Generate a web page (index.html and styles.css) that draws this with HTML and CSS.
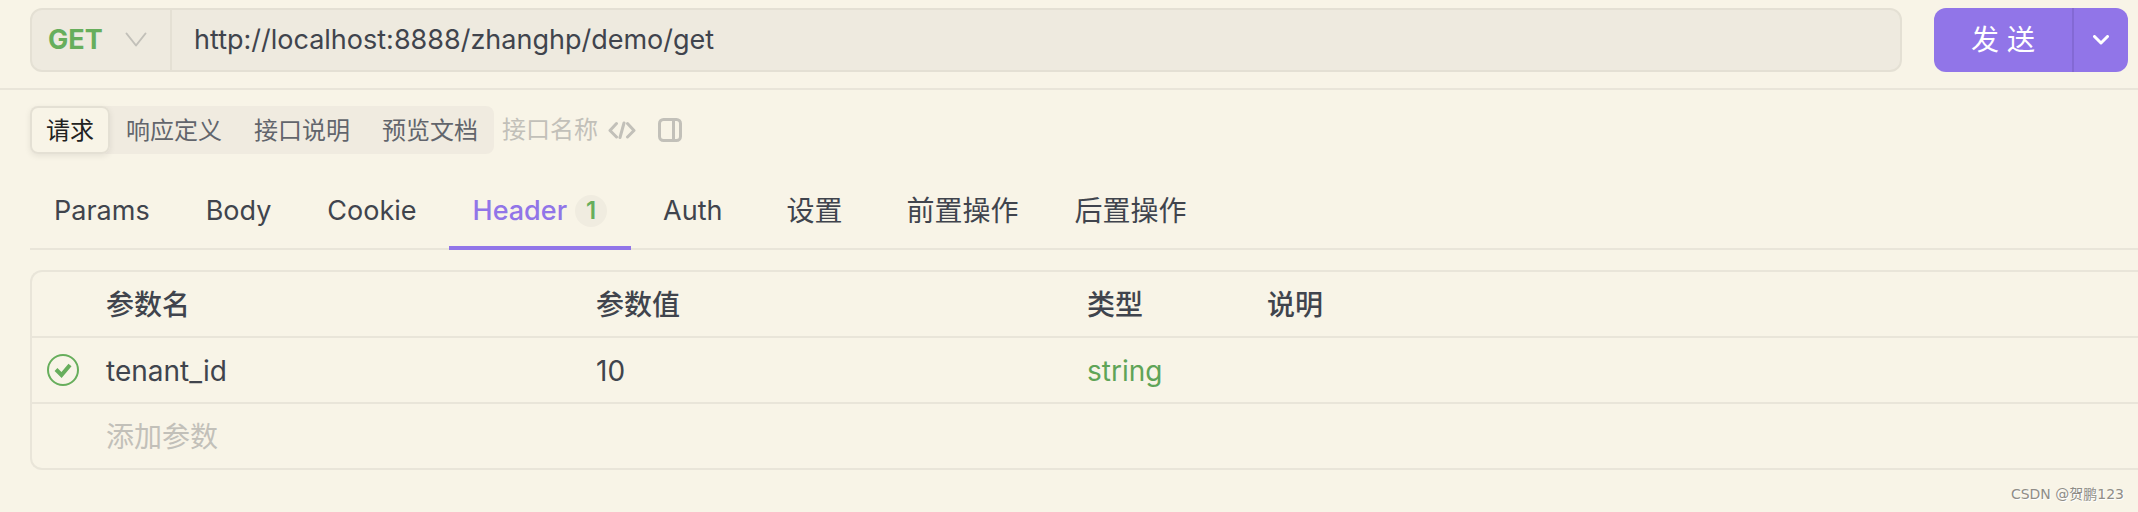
FILE: index.html
```
<!DOCTYPE html>
<html lang="zh-CN">
<head>
    <meta charset="UTF-8">
    <meta name="viewport" content="width=device-width, initial-scale=1.0">
    <title>接口调试</title>
    <link rel="stylesheet" href="styles.css">
</head>
<body>
    <form class="request-bar">
        <div class="url-box">
            <div class="method">
                <select class="method-select" aria-label="请求方法">
                    <option>GET</option>
                    <option>POST</option>
                </select>
                <svg class="method-arrow" viewBox="0 0 22 16" width="22" height="16"><path d="M1.5 1.5 L11 13.5 L20.5 1.5"/></svg>
            </div>
            <input class="url-input" type="text" aria-label="请求地址" value="http://localhost:8888/zhanghp/demo/get">
        </div>
        <div class="send">
            <button type="button" class="send-main">发 送</button>
            <button type="button" class="send-more" aria-label="更多">
                <svg viewBox="0 0 16 10" width="16" height="10"><path d="M1.5 1.5 L8 8 L14.5 1.5"/></svg>
            </button>
        </div>
    </form>

    <div class="views">
        <div class="segment">
            <button type="button" class="active">请求</button>
            <button type="button">响应定义</button>
            <button type="button">接口说明</button>
            <button type="button">预览文档</button>
        </div>
        <input class="api-name" type="text" aria-label="接口名称" placeholder="接口名称">
        <button type="button" class="icon-btn" aria-label="代码">
            <svg viewBox="0 0 28 20" width="28" height="20"><path d="M8.5 3.5 L2 10.5 L8.5 17 M19.5 3.5 L26 10.5 L19.5 17 M16 3 L12 17.5"/></svg>
        </button>
        <button type="button" class="icon-btn" aria-label="布局">
            <svg viewBox="0 0 24 24" width="24" height="24"><rect x="1.5" y="1.5" width="21" height="21" rx="4"/><path d="M15.5 1.5 V22.5"/></svg>
        </button>
    </div>

    <main class="content">
        <nav class="tabs">
            <a href="#params">Params</a>
            <a href="#body">Body</a>
            <a href="#cookie">Cookie</a>
            <a href="#header" class="active">Header<span class="badge">1</span></a>
            <a href="#auth">Auth</a>
            <a href="#settings" class="zh">设置</a>
            <a href="#pre" class="zh">前置操作</a>
            <a href="#post" class="zh">后置操作</a>
        </nav>

        <div class="table-box">
            <table class="params">
                <colgroup>
                    <col class="col-check">
                    <col class="col-name">
                    <col class="col-value">
                    <col class="col-type">
                    <col>
                </colgroup>
                <thead>
                    <tr>
                        <th></th>
                        <th>参数名</th>
                        <th>参数值</th>
                        <th>类型</th>
                        <th>说明</th>
                    </tr>
                </thead>
                <tbody>
                    <tr>
                        <td class="check-cell">
                            <label class="check">
                                <input type="checkbox" aria-label="启用" checked>
                                <svg viewBox="0 0 32 32" width="32" height="32"><path d="M9 15.5 L14.5 21 L23 11"/></svg>
                            </label>
                        </td>
                        <td>tenant_id</td>
                        <td>10</td>
                        <td class="type">string</td>
                        <td></td>
                    </tr>
                    <tr>
                        <td></td>
                        <td><input class="add-input" type="text" aria-label="添加参数" placeholder="添加参数"></td>
                        <td></td>
                        <td></td>
                        <td></td>
                    </tr>
                </tbody>
            </table>
        </div>
    </main>

    <div class="watermark">CSDN @贺鹏123</div>
</body>
</html>
```

FILE: styles.css
```
* {
    box-sizing: border-box;
}

body {
    margin: 0;
    background-color: #f8f4e7;
    color: #40444d;
    font-family: Inter, "Noto Sans CJK SC", sans-serif;
    font-size: 28px;
    line-height: 40px;
}

button, input, select {
    margin: 0;
    padding: 0;
    border: none;
    background: none;
    color: inherit;
    font: inherit;
}

button {
    cursor: pointer;
}

input::placeholder {
    color: #c2c0b9;
    opacity: 1;
}

svg {
    display: block;
    fill: none;
    stroke: currentColor;
    stroke-linecap: round;
    stroke-linejoin: round;
}

/* request bar */
.request-bar {
    display: flex;
    gap: 32px;
    padding: 8px 10px 16px 30px;
    border-bottom: 2px solid #e9e5d9;
}

.url-box {
    display: flex;
    flex: 1;
    height: 64px;
    border: 2px solid #e4e0d4;
    border-radius: 12px;
    background-color: #eeeadf;
}

.method {
    position: relative;
    width: 140px;
    border-right: 2px solid #e4e0d4;
}

.method-select {
    width: 100%;
    height: 100%;
    padding-left: 16px;
    appearance: none;
    color: #67ae5c;
    font-weight: 700;
    font-size: 27px;
}

.method-arrow {
    position: absolute;
    top: 22px;
    right: 23px;
    color: #c2c0b9;
    stroke-width: 2;
    pointer-events: none;
}

.url-input {
    flex: 1;
    padding: 0 22px;
    font-size: 27px;
}

.send {
    display: flex;
    height: 64px;
    border-radius: 12px;
    overflow: hidden;
    background-color: #9175e8;
    color: #fff;
}

.send-main {
    width: 138px;
}

.send-more {
    display: flex;
    align-items: center;
    justify-content: center;
    width: 56px;
    border-left: 2px solid #8369d4;
    stroke-width: 3;
}

/* view switch */
.views {
    display: flex;
    align-items: center;
    padding: 16px 30px 0;
    font-size: 24px;
}

.segment {
    display: flex;
    margin-right: 8px;
    border-radius: 8px;
    background-color: #f0ebe0;
    color: #62656c;
}

.segment button {
    height: 48px;
    padding: 2px 16px 0;
    border-radius: 8px;
}

.segment .active {
    background-color: #f8f4e7;
    color: #222;
    box-shadow: inset 0 0 0 2px #e4e0d4, 0 2px 6px rgba(0, 0, 0, 0.08);
}

.api-name {
    width: 106px;
    height: 44px;
    padding-bottom: 2px;
}

.icon-btn {
    margin-right: 22px;
    color: #c2c0b9;
    stroke-width: 3;
}

/* request tabs */
.content {
    padding-left: 30px;
}

.tabs {
    display: flex;
    gap: 8px;
    margin-top: 16px;
    border-bottom: 2px solid #e9e5d9;
    font-size: 27px;
}

.tabs a {
    display: flex;
    align-items: center;
    justify-content: center;
    height: 80px;
    margin-bottom: -2px;
    padding: 6px 24px 0;
    border-bottom: 4px solid transparent;
    color: inherit;
    text-decoration: none;
}

.tabs .zh {
    min-width: 120px;
    font-size: 28px;
}

.tabs .active {
    border-bottom-color: #9175e8;
    color: #9175e8;
    font-weight: 500;
}

.badge {
    width: 32px;
    height: 32px;
    margin-left: 8px;
    border-radius: 50%;
    background-color: #f0ece0;
    color: #67ae5c;
    font-size: 24px;
    font-weight: 600;
    line-height: 32px;
    text-align: center;
}

/* params table */
.table-box {
    margin-top: 20px;
    border: 2px solid #e9e5d9;
    border-right: none;
    border-radius: 12px 0 0 12px;
}

.params {
    width: 100%;
    border-spacing: 0;
    table-layout: fixed;
}

.col-check {
    width: 60px;
}

.col-name {
    width: 490px;
}

.col-value {
    width: 491px;
}

.col-type {
    width: 180px;
}

.params th, .params td {
    height: 66px;
    padding: 2px 14px 0;
    border-bottom: 2px solid #e9e5d9;
    text-align: left;
}

.params th {
    font-weight: 500;
}

.params tbody tr:last-child td {
    height: 64px;
    border-bottom: none;
}

.params .type {
    color: #5fa457;
}

.params .check-cell {
    padding: 0 15px;
}

.check {
    display: block;
    position: relative;
    width: 32px;
    height: 32px;
    color: #67ae5c;
}

.check input {
    display: block;
    width: 32px;
    height: 32px;
    border: 2px solid;
    border-radius: 50%;
    appearance: none;
}

.check svg {
    position: absolute;
    top: 0;
    left: 0;
    stroke-width: 4;
    stroke-linecap: butt;
    stroke-linejoin: miter;
}

.add-input {
    display: block;
    width: 100%;
}

.watermark {
    position: absolute;
    right: 14px;
    bottom: 8px;
    color: #8f8d88;
    font-family: "DejaVu Sans", "Noto Sans CJK SC", sans-serif;
    font-size: 14px;
    line-height: 20px;
    text-shadow: 1px 1px 0 #fff;
}
```
